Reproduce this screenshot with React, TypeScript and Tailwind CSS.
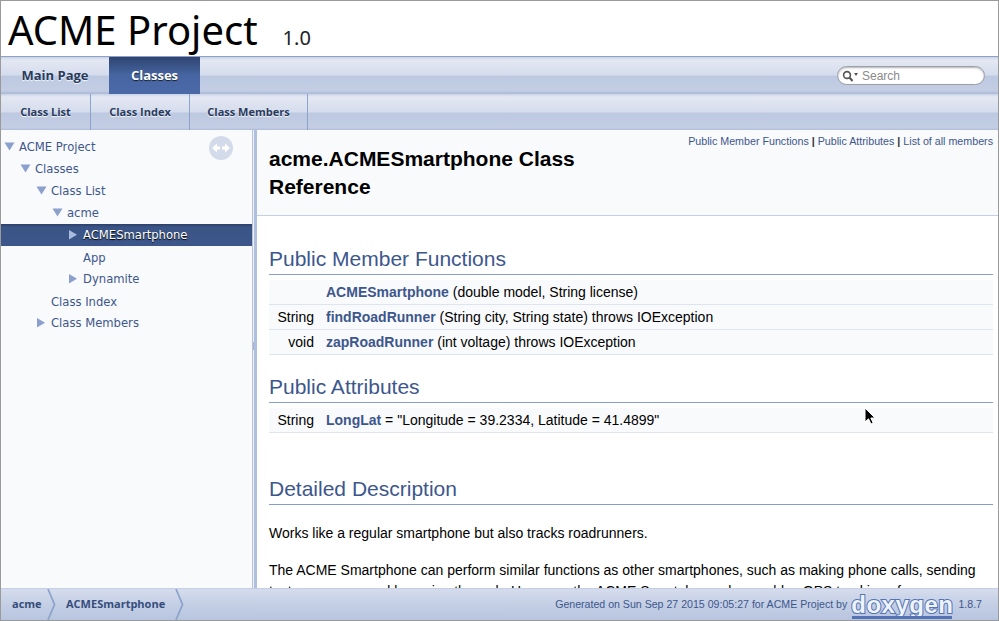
const tree = [
  { label: "ACME Project", x: 19, arrow: "down", ax: 4 },
  { label: "Classes", x: 35, arrow: "down", ax: 20 },
  { label: "Class List", x: 51, arrow: "down", ax: 36 },
  { label: "acme", x: 67, arrow: "down", ax: 52 },
  { label: "ACMESmartphone", x: 83, arrow: "right", ax: 68, active: true },
  { label: "App", x: 83, arrow: "", ax: 0, low: true },
  { label: "Dynamite", x: 83, arrow: "right", ax: 68 },
  { label: "Class Index", x: 51, arrow: "", ax: 0, low: true },
  { label: "Class Members", x: 51, arrow: "right", ax: 36 },
];

const tabBg =
  "bg-[linear-gradient(#c9d3e7_0px,#e3e8f3_3px,#d5dcec_18px,#bdc9e1_19px,#c3cee4_34px,#aebcd9_36px)]";

const Arrow = ({ dir, active }: { dir: string; active?: boolean }) => (
  <svg width="11" height="11" viewBox="0 0 11 11" className="shrink-0">
    {dir === "down" ? (
      <path d="M0.5 1.5h10L5.5 9.5z" fill={active ? "#a9bbdf" : "#8ba0cc"} />
    ) : (
      <path d="M1 1v9.5L9 5.75z" fill={active ? "#a9bbdf" : "#8ba0cc"} />
    )}
  </svg>
);

const Chevron = () => (
  <svg width="10" height="31" viewBox="0 0 10 31" className="shrink-0">
    <path d="M1 0l6.5 15.500L1 31" fill="none" stroke="#8ea3cc" strokeWidth="1.8" />
  </svg>
);

const Member = ({ type, name, rest }: { type: string; name: string; rest: string }) => (
  <div className="flex h-[25px] items-center border-b border-[#dee4f0] bg-[#f9fafc] text-[14px] text-black">
    <span className="w-[45px] text-right">{type}</span>
    <span className="ml-[12px]">
      <b className="text-[#3d578c]">{name}</b> {rest}
    </span>
  </div>
);

export default function App() {
  return (
    <div className="relative flex h-screen flex-col overflow-hidden border-[1px] border-[#9a9a9a] bg-white font-['Liberation_Sans',sans-serif]">
      {/* title */}
      <div className="flex h-[56px] shrink-0 items-baseline border-b border-[#8ea0c8] pl-[7px] pt-[1px]">
        <span className="font-['Noto_Sans',sans-serif] text-[40px] leading-[55px] text-black">ACME Project</span>
        <span className="ml-[25px] font-['Noto_Sans',sans-serif] text-[20px] text-[#222]">1.0</span>
      </div>

      {/* main tabs */}
      <div className={`flex h-[37px] shrink-0 items-stretch justify-between ${tabBg}`}>
        <div className="flex font-['Open_Sans',sans-serif] text-[13px] font-bold">
          <span className="flex w-[108px] items-center justify-center pt-[1px] text-[#283a5d] [text-shadow:0_1px_1px_rgba(255,255,255,0.9)]">
            Main Page
          </span>
          <span className="flex w-[91px] items-center justify-center bg-[linear-gradient(#2f4570,#4665a2_50%,#4a69a6)] pt-[1px] text-white [text-shadow:0_1px_1px_rgba(0,0,0,0.7)]">
            Classes
          </span>
        </div>
        <div className="mr-[13px] mt-[9px] flex h-[19px] w-[148px] items-center rounded-full border border-[#9a9fa9] bg-white pl-[4px] pt-[1px] text-[12px] text-[#8a8a8a] shadow-[inset_0_1px_2px_rgba(0,0,0,0.3)]">
          <svg width="17" height="12" viewBox="0 0 17 12" className="mr-[3px]">
            <circle cx="5" cy="5" r="3.4" fill="none" stroke="#555" strokeWidth="1.6" />
            <path d="M7.5 7.5L10.5 11" stroke="#555" strokeWidth="2" />
            <path d="M12 3h4l-2 3z" fill="#555" />
          </svg>
          Search
        </div>
      </div>

      {/* sub tabs */}
      <div className={`flex h-[36px] shrink-0 font-['Open_Sans',sans-serif] text-[11px] font-bold text-[#283a5d] [text-shadow:0_1px_1px_rgba(255,255,255,0.9)] ${tabBg}`}>
        <span className="flex w-[90px] items-center justify-center border-r border-[#8ea3cc] pt-[1px]">Class List</span>
        <span className="flex w-[99px] items-center justify-center border-r border-[#8ea3cc] pt-[1px]">Class Index</span>
        <span className="flex w-[118px] items-center justify-center border-r border-[#8ea3cc] pt-[1px]">Class Members</span>
      </div>

      {/* body */}
      <div className="flex min-h-0 flex-1">
        <div className="relative w-[251px] shrink-0 bg-[#f9fafc] pt-[6px] font-['DejaVu_Sans',sans-serif] text-[11.6px] text-[#3d578c]">
          {tree.map((item) => (
            <div
              key={item.label}
              className={`relative flex h-[22px] items-center ${item.low ? "pt-[4px]" : "pt-[2px]"} ${
                item.active
                  ? "bg-[linear-gradient(#2b3f68,#3a5486_3px,#3d578c)] text-white [text-shadow:0_1px_1px_#000]"
                  : ""
              }`}
              style={{ paddingLeft: item.x - 1 }}
            >
              {item.arrow && (
                <span className="absolute top-[5px]" style={{ left: item.ax - 1 }}>
                  <Arrow dir={item.arrow} active={item.active} />
                </span>
              )}
              {item.label}
            </div>
          ))}
          <div className="absolute left-[208px] top-[6px] flex h-[24px] w-[24px] items-center justify-center rounded-full bg-[#d3dbea]">
            <svg width="18" height="10" viewBox="0 0 18 10">
              <path d="M0 5l5-4.500v3h3v3h-3v3zM18 5l-5-4.500v3h-3v3h3v3z" fill="#fff" />
            </svg>
          </div>
        </div>
        <div className="relative w-[5px] shrink-0 bg-[linear-gradient(90deg,#b9c3d8_1px,#eef1f7_1px,#eef1f7_2px,#b0bfde_2px)]">
          <span className="absolute left-[1px] top-[212px] h-[8px] w-[1px] bg-[#a9b6d2]" />
        </div>

        <div className="min-w-0 flex-1 overflow-hidden">
          <div className="relative h-[86px] border-b border-[#c4cfe5] bg-[#f9fafc]">
            <div className="absolute right-[5px] top-[5px] text-[10.7px] leading-[13px] text-[#3d578c]">
              Public Member Functions <span className="font-bold text-[#333]">|</span> Public Attributes{" "}
              <span className="font-bold text-[#333]">|</span> List of all members
            </div>
            <div className="pl-[12px] pt-[15px] text-[21px] font-bold leading-[28px] text-black">
              acme.ACMESmartphone Class
              <br />
              Reference
            </div>
          </div>

          <div className="pl-[12px] pr-[5px]">
            <h2 className="mt-[26px] h-[33px] border-b border-[#879ecb] text-[21px] leading-[34px] text-[#3d578c]">
              Public Member Functions
            </h2>
            <div className="mt-[5px]">
              <Member type="" name="ACMESmartphone" rest="(double model, String license)" />
              <Member type="String" name="findRoadRunner" rest="(String city, String state) throws IOException" />
              <Member type="void" name="zapRoadRunner" rest="(int voltage) throws IOException" />
            </div>
            <h2 className="mt-[15px] h-[33px] border-b border-[#879ecb] text-[21px] leading-[34px] text-[#3d578c]">
              Public Attributes
            </h2>
            <div className="mt-[5px]">
              <Member type="String" name="LongLat" rest={'= "Longitude = 39.2334, Latitude = 41.4899"'} />
            </div>
            <h2 className="mt-[39px] h-[33px] border-b border-[#879ecb] text-[21px] leading-[34px] text-[#3d578c]">
              Detailed Description
            </h2>
            <p className="mt-[20px] text-[14px] leading-[17px] text-black">
              Works like a regular smartphone but also tracks roadrunners.
            </p>
            <p className="mt-[18px] text-[14px] leading-[21px] text-black">
              The ACME Smartphone can perform similar functions as other smartphones, such as making phone calls, sending
              text messages, and browsing the web. However, the ACME Smartphone also enables GPS tracking of runners.
            </p>
          </div>
        </div>
      </div>

      {/* footer */}
      <div className="relative z-10 flex h-[32px] shrink-0 items-center justify-between border-t border-[#c4cfe5] bg-[linear-gradient(#d5dcec,#c4cfe5_50%,#b8c5df)] text-[#3d578c]">
        <div className="flex h-full items-center font-['Open_Sans',sans-serif] text-[11px] font-bold text-[#364d7c]">
          <span className="w-[46px] pl-[11px]">acme</span>
          <Chevron />
          <span className="ml-[9px] w-[109px]">ACMESmartphone</span>
          <Chevron />
        </div>
        <div className="flex items-center pr-[16px] text-[10.6px]">
          <span>Generated on Sun Sep 27 2015 09:05:27 for ACME Project by</span>
          <span className="relative ml-[4px] text-[24px] font-bold leading-[26px] tracking-[0.5px] text-[#eef2f9] [-webkit-text-stroke:2px_#5373b4] [paint-order:stroke_fill]">
            doxygen
            <span className="absolute bottom-[-1px] left-[1px] right-[1px] h-[3px] bg-[#5373b4]" />
          </span>
          <span className="ml-[5px]">1.8.7</span>
        </div>
      </div>

      {/* mouse pointer */}
      <svg width="12" height="18" viewBox="0 0 12 18" className="absolute left-[863px] top-[406px] z-20">
        <path d="M1 1v14l3.500-3.200L7 17l2.200-1-2.400-5H11z" fill="#000" stroke="#fff" strokeWidth="1" />
      </svg>
    </div>
  );
}
